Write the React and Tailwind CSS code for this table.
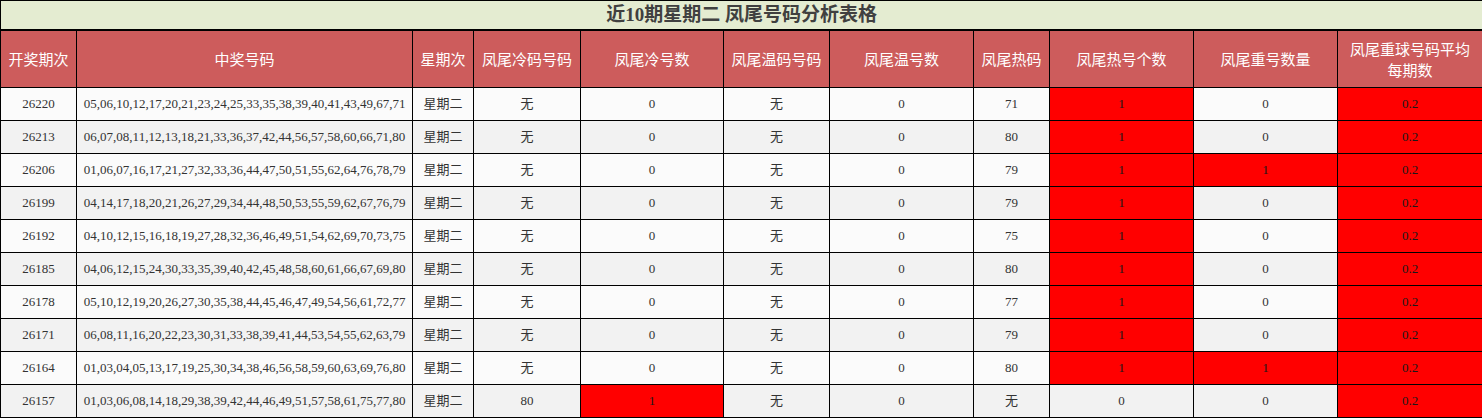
import React from "react";

const headers = [
  "开奖期次",
  "中奖号码",
  "星期次",
  "凤尾冷码号码",
  "凤尾冷号数",
  "凤尾温码号码",
  "凤尾温号数",
  "凤尾热码",
  "凤尾热号个数",
  "凤尾重号数量",
  "凤尾重球号码平均每期数",
];

const widths = [76, 336, 61, 107, 143, 106, 144, 76, 144, 144, 145];

// [期次, 号码, 冷码, 冷数, 温码, 温数, 热码, 热数, 重号, 平均]
const rows = [
  ["26220", "05,06,10,12,17,20,21,23,24,25,33,35,38,39,40,41,43,49,67,71", "无", "0", "无", "0", "71", "1", "0", "0.2"],
  ["26213", "06,07,08,11,12,13,18,21,33,36,37,42,44,56,57,58,60,66,71,80", "无", "0", "无", "0", "80", "1", "0", "0.2"],
  ["26206", "01,06,07,16,17,21,27,32,33,36,44,47,50,51,55,62,64,76,78,79", "无", "0", "无", "0", "79", "1", "1", "0.2"],
  ["26199", "04,14,17,18,20,21,26,27,29,34,44,48,50,53,55,59,62,67,76,79", "无", "0", "无", "0", "79", "1", "0", "0.2"],
  ["26192", "04,10,12,15,16,18,19,27,28,32,36,46,49,51,54,62,69,70,73,75", "无", "0", "无", "0", "75", "1", "0", "0.2"],
  ["26185", "04,06,12,15,24,30,33,35,39,40,42,45,48,58,60,61,66,67,69,80", "无", "0", "无", "0", "80", "1", "0", "0.2"],
  ["26178", "05,10,12,19,20,26,27,30,35,38,44,45,46,47,49,54,56,61,72,77", "无", "0", "无", "0", "77", "1", "0", "0.2"],
  ["26171", "06,08,11,16,20,22,23,30,31,33,38,39,41,44,53,54,55,62,63,79", "无", "0", "无", "0", "79", "1", "0", "0.2"],
  ["26164", "01,03,04,05,13,17,19,25,30,34,38,46,56,58,59,60,63,69,76,80", "无", "0", "无", "0", "80", "1", "1", "0.2"],
  ["26157", "01,03,06,08,14,18,29,38,39,42,44,46,49,51,57,58,61,75,77,80", "80", "1", "无", "0", "无", "0", "0", "0.2"],
];

const isHot = (v) => v !== "0" && v !== "无";

const Cell = ({ children, red }) => (
  <td
    className={`border border-black text-center p-0 ${
      red ? "bg-[#ff0000] text-[#1a1a1a]" : "text-[#333333]"
    }`}
  >
    {children}
  </td>
);

const App = () => {
  return (
    <div
      className="w-[1482px] bg-white"
      style={{ fontFamily: '"Liberation Serif", "Noto Sans CJK SC", serif' }}
    >
      <table className="w-[1482px] table-fixed border-collapse text-[13px]">
        <colgroup>
          {widths.map((w, i) => (
            <col key={i} style={{ width: w }} />
          ))}
        </colgroup>
        <thead>
          <tr className="h-[29px]">
            <th
              colSpan={11}
              className="border border-black border-b-2 bg-[#e4ecd1] text-[19px] font-bold text-[#404040] leading-none p-0"
            >
              近10期星期二 凤尾号码分析表格
            </th>
          </tr>
          <tr className="h-[58px] bg-[#cd5c5c]">
            {headers.map((h, i) => (
              <th
                key={h}
                className="border border-black font-normal text-white text-[15px] leading-[21px] px-1 p-0"
                style={{ fontFamily: '"Noto Sans CJK SC", sans-serif' }}
              >
                {i === 10 ? (
                  <>
                    凤尾重球号码平均
                    <br />
                    每期数
                  </>
                ) : (
                  h
                )}
              </th>
            ))}
          </tr>
        </thead>
        <tbody>
          {rows.map((r, idx) => {
            const [issue, nums, cold, coldN, warm, warmN, hot, hotN, rep, avg] = r;
            return (
              <tr
                key={issue}
                className={`h-[33px] ${idx % 2 === 0 ? "bg-[#fbfbfb]" : "bg-[#f2f2f2]"}`}
              >
                <Cell>{issue}</Cell>
                <Cell>{nums}</Cell>
                <Cell>星期二</Cell>
                <Cell>{cold}</Cell>
                <Cell red={isHot(coldN)}>{coldN}</Cell>
                <Cell>{warm}</Cell>
                <Cell>{warmN}</Cell>
                <Cell>{hot}</Cell>
                <Cell red={isHot(hotN)}>{hotN}</Cell>
                <Cell red={isHot(rep)}>{rep}</Cell>
                <Cell red>{avg}</Cell>
              </tr>
            );
          })}
        </tbody>
      </table>
    </div>
  );
};

export default App;
